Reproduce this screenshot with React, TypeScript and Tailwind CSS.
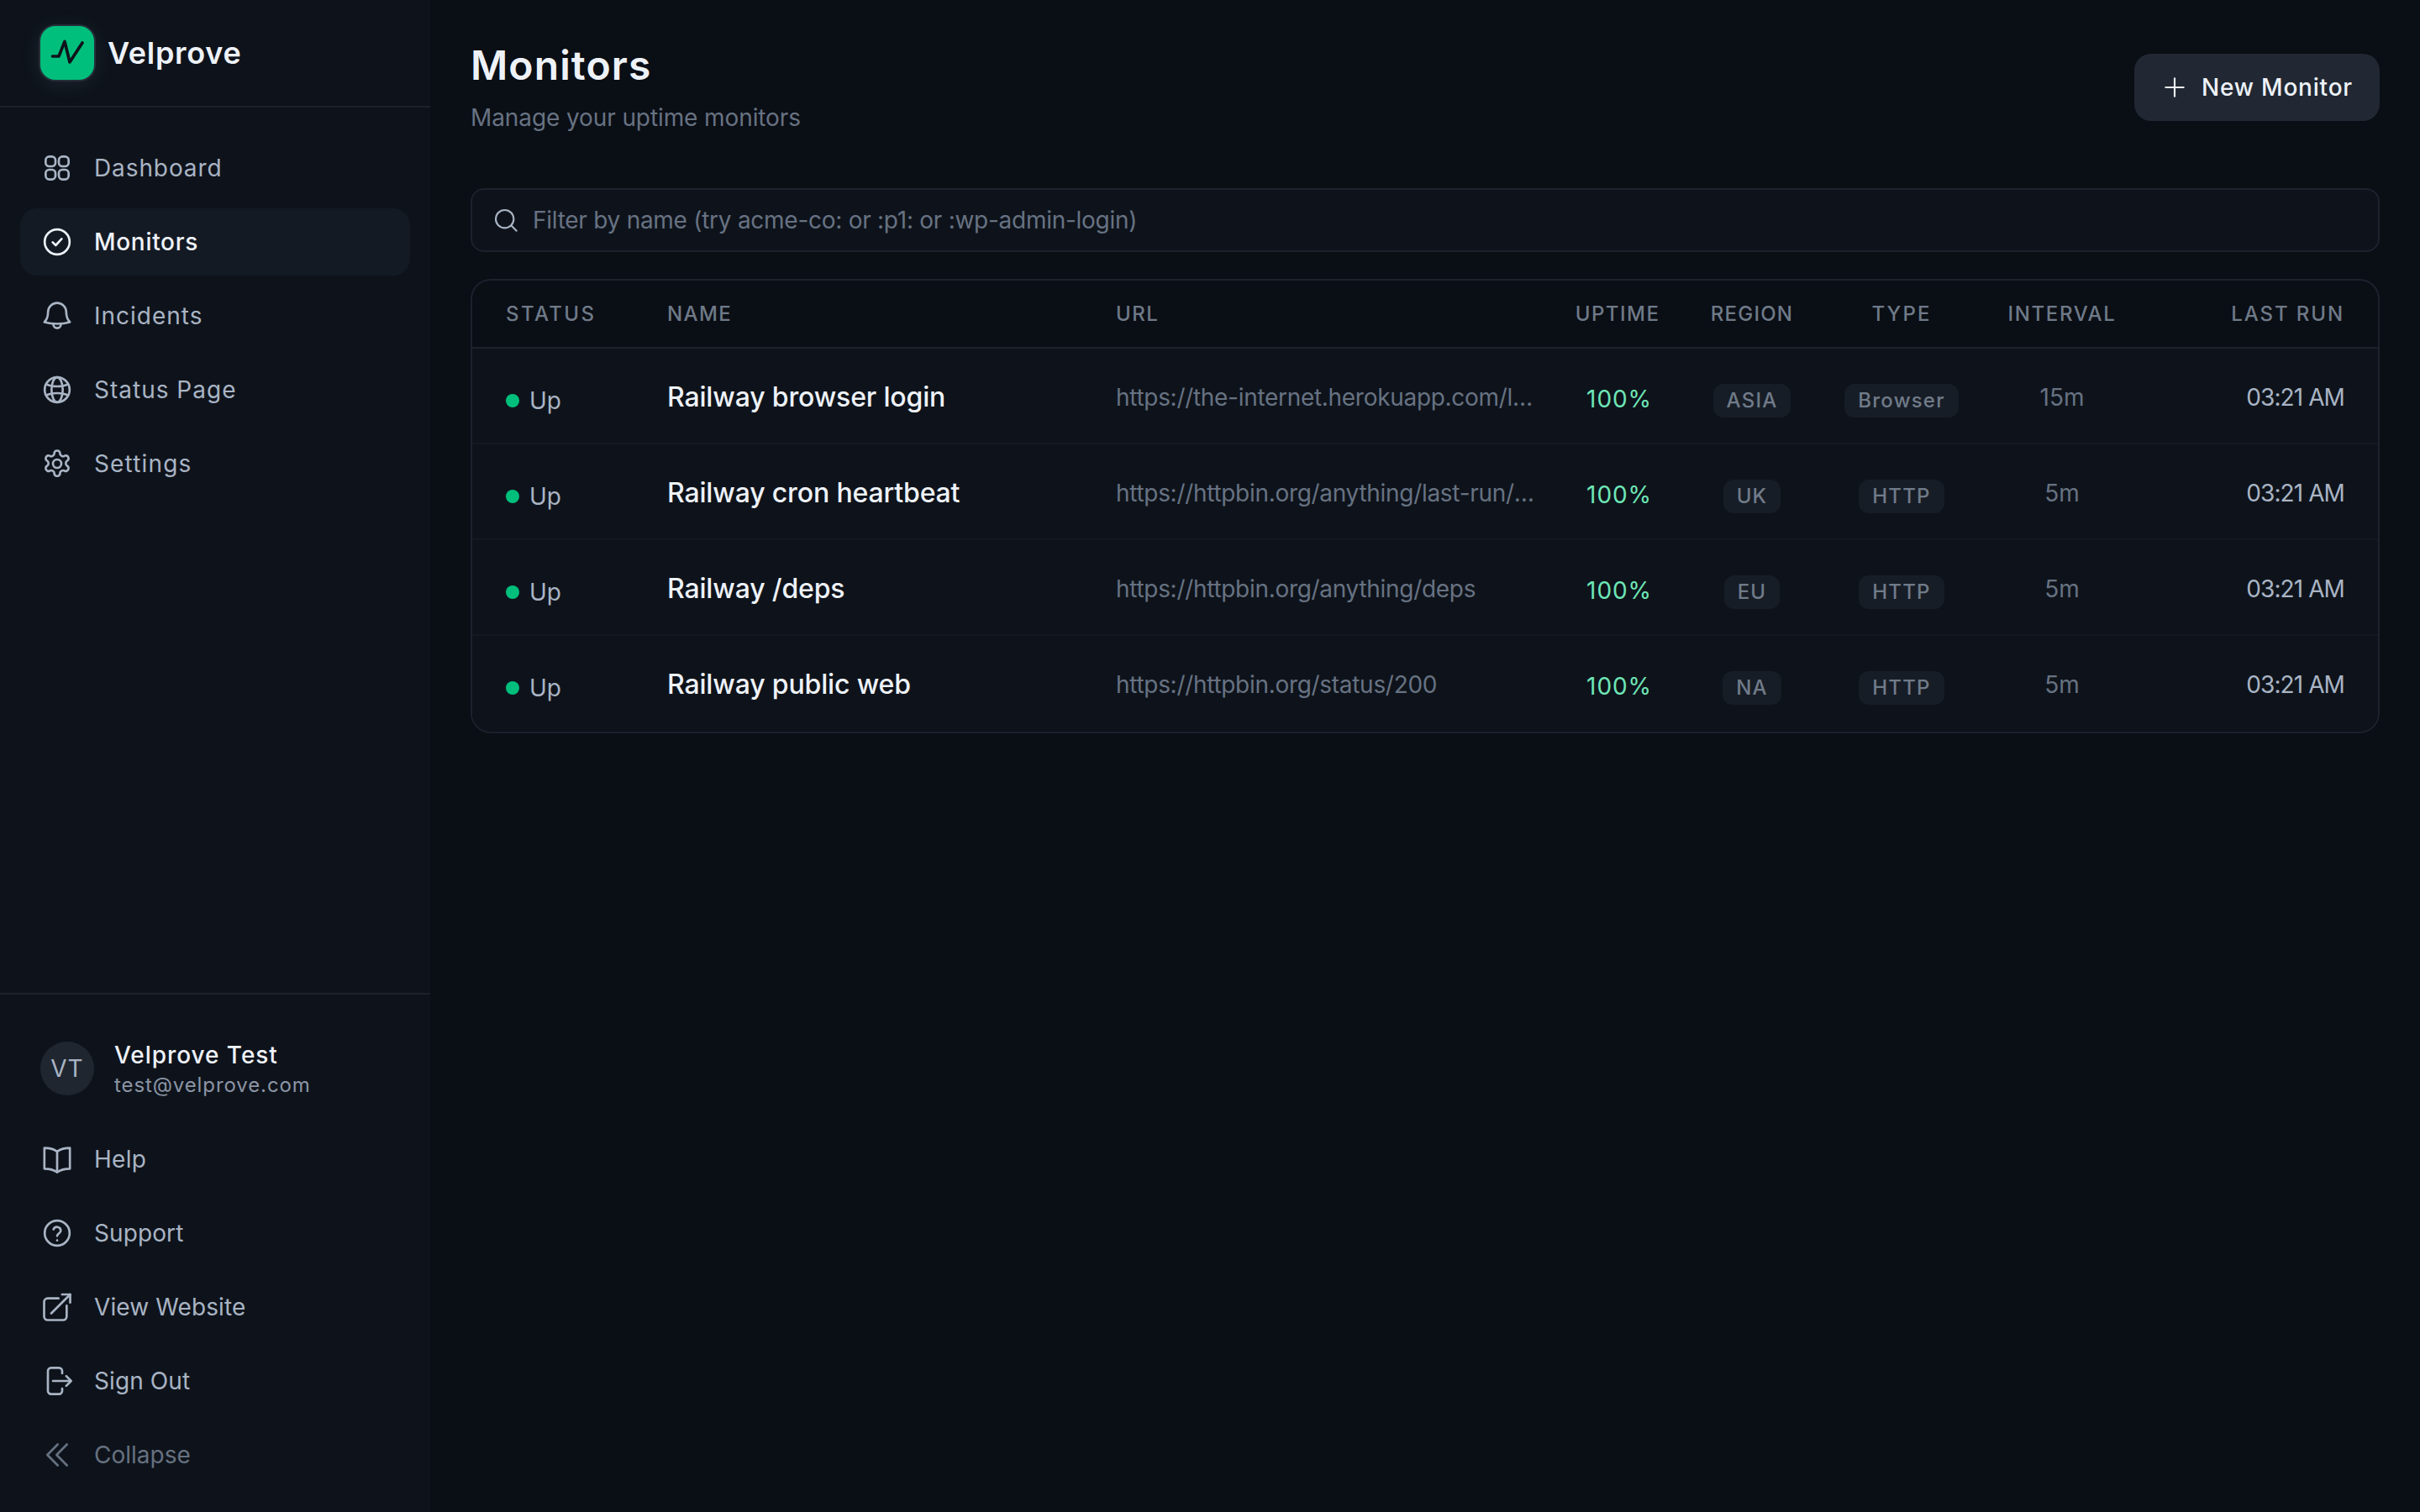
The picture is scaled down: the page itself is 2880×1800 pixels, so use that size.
import React from "react";

const Svg = ({ children, sw = 1.6 }: { children: React.ReactNode; sw?: number }) => (
  <svg viewBox="0 0 24 24" fill="none" stroke="currentColor" strokeWidth={sw} strokeLinecap="round" strokeLinejoin="round" className="h-10 w-10 shrink-0">
    {children}
  </svg>
);

const IGrid = () => (
  <Svg>
    <rect x="3.8" y="3.8" width="7" height="7" rx="2.6" />
    <rect x="13.2" y="3.8" width="7" height="7" rx="2.6" />
    <rect x="3.8" y="13.2" width="7" height="7" rx="2.6" />
    <rect x="13.2" y="13.2" width="7" height="7" rx="2.6" />
  </Svg>
);
const ICheck = () => (
  <Svg>
    <circle cx="12" cy="12" r="8.9" />
    <path d="M8.800 12.200l2.200 2.200 4.200-4.600" />
  </Svg>
);
const IBell = () => (
  <Svg>
    <path d="M12 2.800a6.500 6.500 0 0 0-6.500 6.500c0 3.600-.9 5.400-2.600 7.200 3 .9 6 1.200 9.100 1.200s6.100-.3 9.100-1.200c-1.700-1.800-2.600-3.600-2.600-7.200A6.500 6.500 0 0 0 12 2.800z" />
    <path d="M9.300 18c0 1.600 1.200 2.800 2.700 2.800s2.700-1.200 2.700-2.800" />
  </Svg>
);
const IGlobe = () => (
  <Svg>
    <circle cx="12" cy="12" r="8.9" />
    <ellipse cx="12" cy="12" rx="4" ry="8.900" />
    <path d="M4.200 8c2.300 1.200 4.900 1.600 7.800 1.600s5.500-.4 7.800-1.600M4.200 16c2.300-1.200 4.900-1.600 7.800-1.600s5.500.4 7.800 1.600" />
  </Svg>
);
const IGear = () => (
  <Svg>
    <path d="M12.220 2.700h-.44a1.800 1.800 0 0 0-1.800 1.800v.2a1.800 1.800 0 0 1-.9 1.550l-.4.23a1.800 1.800 0 0 1-1.800 0l-.15-.08a1.800 1.800 0 0 0-2.460.66l-.2.35a1.800 1.800 0 0 0 .66 2.460l.15.1a1.800 1.800 0 0 1 .9 1.540v.5a1.800 1.800 0 0 1-.9 1.560l-.15.09a1.800 1.800 0 0 0-.66 2.460l.2.35a1.800 1.800 0 0 0 2.460.66l.15-.08a1.800 1.800 0 0 1 1.800 0l.4.23a1.800 1.800 0 0 1 .9 1.550v.2a1.800 1.800 0 0 0 1.800 1.800h.44a1.800 1.800 0 0 0 1.800-1.800v-.2a1.800 1.800 0 0 1 .9-1.550l.4-.23a1.800 1.800 0 0 1 1.800 0l.15.08a1.800 1.800 0 0 0 2.460-.66l.2-.36a1.800 1.800 0 0 0-.66-2.450l-.15-.08a1.800 1.800 0 0 1-.9-1.560v-.5a1.800 1.800 0 0 1 .9-1.560l.15-.09a1.800 1.800 0 0 0 .66-2.460l-.2-.35a1.800 1.800 0 0 0-2.460-.66l-.15.08a1.800 1.800 0 0 1-1.800 0l-.4-.23a1.800 1.800 0 0 1-.9-1.550v-.2a1.800 1.800 0 0 0-1.800-1.800z" />
    <circle cx="12" cy="12" r="3" />
  </Svg>
);
const IBook = () => (
  <Svg>
    <path d="M12 6.500C9.500 4.700 6.300 4 2.900 4v14.800c3.400 0 6.600.7 9.100 2.500 2.500-1.800 5.700-2.500 9.100-2.500V4c-3.400 0-6.600.7-9.100 2.500z" />
    <path d="M12 6.500v14.800" />
  </Svg>
);
const IHelp = () => (
  <Svg>
    <circle cx="12" cy="12" r="8.9" />
    <path d="M9.400 9.300a2.700 2.700 0 0 1 5.200.9c0 1.800-2.600 2.400-2.600 3.800" />
    <path d="M12 17.200h.01" />
  </Svg>
);
const IExternal = () => (
  <Svg>
    <path d="M13 5.800H5.200a2.500 2.500 0 0 0-2.500 2.500v10.500a2.500 2.500 0 0 0 2.500 2.500h11.100a2.500 2.500 0 0 0 2.500-2.500V11" />
    <path d="M15.500 3h5.800v5.800" />
    <path d="M21.300 3L7.800 16.500" />
  </Svg>
);
const ISignOut = () => (
  <Svg>
    <path d="M15.600 6.600V4.900a2.300 2.300 0 0 0-2.300-2.300H7.700a2.300 2.300 0 0 0-2.300 2.300v14.200a2.300 2.300 0 0 0 2.300 2.300h5.600a2.300 2.300 0 0 0 2.300-2.300v-1.700" />
    <path d="M9 12h12.600" />
    <path d="M18.500 8.500L22 12l-3.500 3.500" />
  </Svg>
);
const IChevrons = () => (
  <Svg>
    <path d="M12.400 4.500L5 12l7.400 7.500" />
    <path d="M19 4.500L11.600 12l7.400 7.500" />
  </Svg>
);

const main = [
  { label: "Dashboard", icon: <IGrid />, ls: "tracking-[0.9px]" },
  { label: "Monitors", icon: <ICheck />, active: true, ls: "tracking-[0.7px]" },
  { label: "Incidents", icon: <IBell />, ls: "tracking-[1px]" },
  { label: "Status Page", icon: <IGlobe />, ls: "tracking-[1px]" },
  { label: "Settings", icon: <IGear />, ls: "tracking-[1.15px]" },
];
const foot = [
  { label: "Help", icon: <IBook />, ls: "tracking-[0.3px]" },
  { label: "Support", icon: <IHelp />, ls: "tracking-[0.1px]" },
  { label: "View Website", icon: <IExternal />, ls: "tracking-[0.1px]" },
  { label: "Sign Out", icon: <ISignOut />, ls: "tracking-[0.1px]" },
];

const NavItem = ({ label, icon, active, dim, ls }: { label: string; icon: React.ReactNode; active?: boolean; dim?: boolean; ls?: string }) => (
  <div
    className={
      "flex h-20 items-center gap-6 rounded-[20px] px-6 text-[28px] " +
      (ls ?? "") +
      " " +
      (active ? "bg-[#131a24] font-medium text-[#eef2f8]" : dim ? "text-[#667180]" : "text-[#a9b4c4]")
    }
  >
    {icon}
    <span>{label}</span>
  </div>
);

const rows = [
  { name: "Railway browser login", url: "https://the-internet.herokuapp.com/login", region: "ASIA", type: "Browser", interval: "15m" },
  { name: "Railway cron heartbeat", url: "https://httpbin.org/anything/last-run/heartbeat", region: "UK", type: "HTTP", interval: "5m" },
  { name: "Railway /deps", url: "https://httpbin.org/anything/deps", region: "EU", type: "HTTP", interval: "5m" },
  { name: "Railway public web", url: "https://httpbin.org/status/200", region: "NA", type: "HTTP", interval: "5m" },
];

const Badge = ({ children }: { children: React.ReactNode }) => (
  <span className="inline-flex h-10 items-center rounded-xl bg-[#171d26] px-4 text-[24px] font-medium tracking-[1.2px] text-[#707b89]">{children}</span>
);

const th = "h-20 text-[24px] font-medium uppercase text-[#6f7a88]";

export default function App() {
  return (
    <div className="flex h-screen w-full overflow-hidden bg-[#0a0e15] font-['Inter',sans-serif]">
      <aside className="flex h-full w-[512px] shrink-0 flex-col bg-[#0e131b]">
        <div className="flex h-32 items-center gap-4 border-b-2 border-[#1c222c] px-12">
          <div className="flex h-16 w-16 items-center justify-center rounded-[18px] bg-[#00bf7c] text-[#0e131b] shadow-[0_0_0_2px_#262e39,0_4px_24px_rgba(120,150,170,0.14)]">
            <svg viewBox="0 0 24 24" fill="none" stroke="currentColor" strokeWidth="2.2" strokeLinecap="round" strokeLinejoin="round" className="h-10 w-10">
              <path d="M1.500 14.400H6L10.200 3.800l3.600 14.800 9-13.800" />
            </svg>
          </div>
          <span className="text-[36px] font-semibold tracking-[0.7px] text-[#eef2f8]">Velprove</span>
        </div>
        <nav className="flex flex-col gap-2 px-6 pt-8">
          {main.map((m) => (
            <NavItem key={m.label} {...m} />
          ))}
        </nav>
        <div className="mt-auto flex flex-col border-t-2 border-[#1c222c] px-6 pb-7 pt-[52px]">
          <div className="mb-8 flex items-center gap-6 pl-6">
            <div className="flex h-16 w-16 items-center justify-center rounded-full bg-[#1f2630] text-[28px] tracking-[1px] text-[#a9b4c4]">VT</div>
            <div className="flex flex-col">
              <span className="text-[28px] leading-10 font-medium tracking-[0.95px] text-[#eef2f8]">Velprove Test</span>
              <span className="text-[24px] leading-8 tracking-[0.9px] text-[#8b95a5]">test@velprove.com</span>
            </div>
          </div>
          <div className="flex flex-col gap-2">
            {foot.map((m) => (
              <NavItem key={m.label} {...m} />
            ))}
            <NavItem label="Collapse" icon={<IChevrons />} dim />
          </div>
        </div>
      </aside>
      <main className="flex-1 px-12 pt-12">
        <div className="flex items-center justify-between">
          <div>
            <h1 className="text-[48px] leading-[60px] font-semibold tracking-[1.1px] text-[#eef2f8]">Monitors</h1>
            <p className="mt-3 text-[28px] leading-10 tracking-[-0.1px] text-[#677282]">Manage your uptime monitors</p>
          </div>
          <button className="flex h-20 items-center gap-4 rounded-[20px] bg-[#212833] px-8 text-[28px] font-medium tracking-[0.8px] text-[#eef2f8]">
            <svg viewBox="0 0 24 24" fill="none" stroke="currentColor" strokeWidth="1.6" strokeLinecap="round" className="h-8 w-8">
              <path d="M12 4v16M4 12h16" />
            </svg>
            New Monitor
          </button>
        </div>
        <div className="mt-16 flex h-[76px] items-center gap-4 rounded-[16px] border-2 border-[#1c222c] bg-[#0e131b] px-6 text-[28px] tracking-[-0.27px] text-[#677282]">
          <svg viewBox="0 0 24 24" fill="none" stroke="#a9b4c4" strokeWidth="1.6" strokeLinecap="round" className="h-8 w-8 shrink-0">
            <circle cx="11" cy="11" r="8" />
            <path d="M17 17l4.500 4.500" />
          </svg>
          <span>Filter by name (try acme-co: or :p1: or :wp-admin-login)</span>
        </div>
        <div className="mt-8 overflow-hidden rounded-3xl border-2 border-[#1c222c]">
          <table className="w-full table-fixed border-collapse">
            <thead>
              <tr className="border-b-2 border-[#1c222c]">
                <th className={th + " w-[192px] pl-10 text-left tracking-[2.4px]"}>Status</th>
                <th className={th + " w-[534px] pl-10 text-left tracking-[1.4px]"}>Name</th>
                <th className={th + " w-[572px] pl-10 text-left tracking-[1.5px]"}>URL</th>
                <th className={th + " w-[130px] text-center tracking-[1.5px]"}>Uptime</th>
                <th className={th + " w-[190px] text-center tracking-[1.2px]"}>Region</th>
                <th className={th + " w-[166px] text-center tracking-[2.1px]"}>Type</th>
                <th className={th + " w-[216px] text-center tracking-[1.65px]"}>Interval</th>
                <th className={th + " pr-10 text-right tracking-[1.9px]"}>Last Run</th>
              </tr>
            </thead>
            <tbody>
              {rows.map((r, i) => (
                <tr key={r.name} className={"h-[114px] border-b-2 bg-[#0e131b] " + (i < 3 ? "border-[#131922]" : "border-transparent")}>
                  <td className="pl-10 pt-3">
                    <span className="flex items-center gap-3 text-[28px] text-[#a9b4c4]">
                      <span className="h-4 w-4 rounded-full bg-[#00bf7c]" />
                      Up
                    </span>
                  </td>
                  <td className="pl-10 pt-1 text-[32px] font-medium tracking-[-0.15px] text-[#eef2f8]">{r.name}</td>
                  <td className="pl-10 pr-8 pt-1">
                    <div className="truncate text-[28px] tracking-[-0.3px] text-[#677282]">{r.url}</div>
                  </td>
                  <td className="pl-1 pt-2 text-center text-[28px] tracking-[0.9px] text-[#6ee7b7]">100%</td>
                  <td className="pt-3 text-center">
                    <Badge>{r.region}</Badge>
                  </td>
                  <td className="pt-3 text-center">
                    <Badge>{r.type}</Badge>
                  </td>
                  <td className="pt-1 text-center text-[28px] text-[#677282]">{r.interval}</td>
                  <td className="pr-10 pt-1 text-right text-[28px] tracking-[-0.9px] text-[#a9b4c4]">03:21 AM</td>
                </tr>
              ))}
            </tbody>
          </table>
        </div>
      </main>
    </div>
  );
}
